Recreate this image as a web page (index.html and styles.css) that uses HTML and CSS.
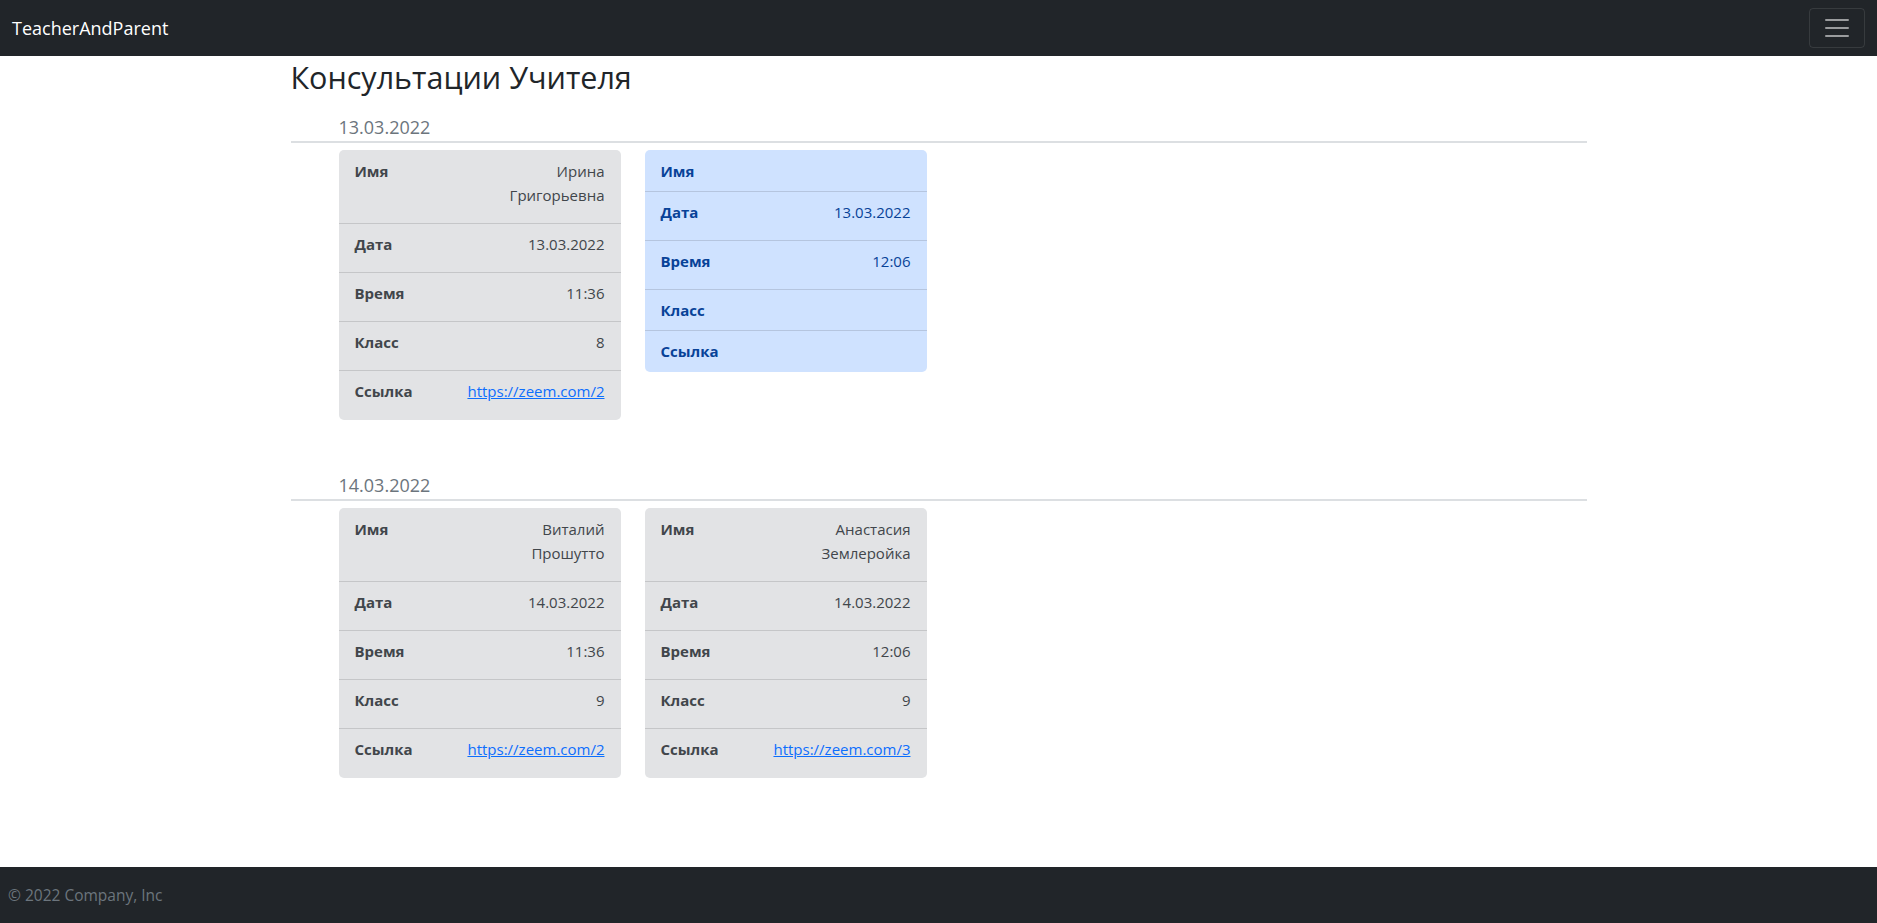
FILE: index.html
```html
<!DOCTYPE html>
<html lang="ru">
<head>
<meta charset="utf-8">
<title>TeacherAndParent</title>
<link rel="stylesheet" href="styles.css">
</head>
<body>
<nav class="navbar">
  <a class="brand" href="#">TeacherAndParent</a>
  <button class="toggler" type="button" aria-label="Toggle navigation">
    <svg class="toggler-icon" viewBox="0 0 30 30" width="30" height="30" aria-hidden="true">
      <path d="M4 7h22M4 15h22M4 23h22" stroke="rgba(255,255,255,0.55)" stroke-width="2" stroke-linecap="round" stroke-miterlimit="10" fill="none"/>
    </svg>
  </button>
</nav>

<main class="container">
  <h1 class="title">Консультации Учителя</h1>

  <section class="day">
    <h5 class="day-date">13.03.2022</h5>
    <hr class="day-rule">
    <div class="cards">
      <dl class="card card-secondary">
        <div class="card-row"><dt>Имя</dt><dd>Ирина Григорьевна</dd></div>
        <div class="card-row"><dt>Дата</dt><dd>13.03.2022</dd></div>
        <div class="card-row"><dt>Время</dt><dd>11:36</dd></div>
        <div class="card-row"><dt>Класс</dt><dd>8</dd></div>
        <div class="card-row"><dt>Ссылка</dt><dd class="card-link"><a href="#">https://zeem.com/2</a></dd></div>
      </dl>
      <dl class="card card-primary">
        <div class="card-row"><dt>Имя</dt><dd></dd></div>
        <div class="card-row"><dt>Дата</dt><dd>13.03.2022</dd></div>
        <div class="card-row"><dt>Время</dt><dd>12:06</dd></div>
        <div class="card-row"><dt>Класс</dt><dd></dd></div>
        <div class="card-row"><dt>Ссылка</dt><dd></dd></div>
      </dl>
    </div>
  </section>

  <section class="day">
    <h5 class="day-date">14.03.2022</h5>
    <hr class="day-rule">
    <div class="cards">
      <dl class="card card-secondary">
        <div class="card-row"><dt>Имя</dt><dd>Виталий Прошутто</dd></div>
        <div class="card-row"><dt>Дата</dt><dd>14.03.2022</dd></div>
        <div class="card-row"><dt>Время</dt><dd>11:36</dd></div>
        <div class="card-row"><dt>Класс</dt><dd>9</dd></div>
        <div class="card-row"><dt>Ссылка</dt><dd class="card-link"><a href="#">https://zeem.com/2</a></dd></div>
      </dl>
      <dl class="card card-secondary">
        <div class="card-row"><dt>Имя</dt><dd>Анастасия Землеройка</dd></div>
        <div class="card-row"><dt>Дата</dt><dd>14.03.2022</dd></div>
        <div class="card-row"><dt>Время</dt><dd>12:06</dd></div>
        <div class="card-row"><dt>Класс</dt><dd>9</dd></div>
        <div class="card-row"><dt>Ссылка</dt><dd class="card-link"><a href="#">https://zeem.com/3</a></dd></div>
      </dl>
    </div>
  </section>
</main>

<footer class="footer">© 2022 Company, Inc</footer>
</body>
</html>
```

FILE: styles.css
```css
* { box-sizing: border-box; }

html, body { height: 100%; }

body {
  margin: 0;
  min-height: 100vh;
  display: flex;
  flex-direction: column;
  font-family: "Open Sans", "Noto Sans", "Liberation Sans", sans-serif;
  font-size: 15px;
  line-height: 24px;
  color: #212529;
  background: #fff;
}

/* Navbar */
.navbar {
  height: 56px;
  flex: none;
  background: #212529;
  display: flex;
  align-items: center;
  justify-content: space-between;
  padding: 0 12px;
}

.brand {
  color: #fff;
  text-decoration: none;
  font-size: 18px;
  line-height: 28px;
}

.toggler {
  width: 56px;
  height: 40px;
  padding: 4px 12px;
  background: transparent;
  border: 1px solid rgba(255, 255, 255, 0.1);
  border-radius: 4px;
  display: flex;
  align-items: center;
  justify-content: center;
}

.toggler-icon { display: block; }

/* Main */
.container {
  width: 100%;
  max-width: 1320px;
  padding: 0 12px;
  margin: 0 auto;
}

.title {
  margin: 5px 0 0;
  font-size: 30.5px;
  line-height: 32px;
  font-weight: 500;
  color: #212529;
}

.day { margin-top: 22px; }
.day + .day { margin-top: 53px; }

.day-date {
  margin: 0;
  padding-left: 48px;
  font-size: 18px;
  line-height: 24px;
  font-weight: 400;
  color: #6c757d;
}

.day-rule {
  margin: 2px 0 0;
  border: 0;
  height: 2px;
  background: #dcdfe2;
}

.cards {
  display: flex;
  align-items: flex-start;
  gap: 24px;
  margin-left: 48px;
  margin-top: 7px;
}

.card {
  width: 282px;
  margin: 0;
  padding: 1px 0;
  border-radius: 5px;
  overflow: hidden;
}

.card-row {
  display: flex;
  justify-content: space-between;
  align-items: flex-start;
  padding: 8px 16px;
  border-bottom: 1px solid rgba(0, 0, 0, 0.125);
}

.card-row:last-child { border-bottom: 0; }

.card-row dt {
  font-weight: 700;
}

.card-row dd {
  margin: 0 0 8px;
  max-width: 125px;
  text-align: right;
}

.card-row .card-link {
  max-width: none;
}

.card-link a {
  color: #0d6efd;
  text-decoration: underline;
  white-space: nowrap;
}

.card-secondary {
  background: #e2e3e5;
  color: #41464b;
}

.card-primary {
  background: #cfe2ff;
  color: #084298;
}

/* Footer */
.footer {
  margin-top: auto;
  flex: none;
  height: 56px;
  background: #212529;
  color: #6c757d;
  display: flex;
  align-items: center;
  padding-left: 8px;
  font-size: 15.5px;
}
```
